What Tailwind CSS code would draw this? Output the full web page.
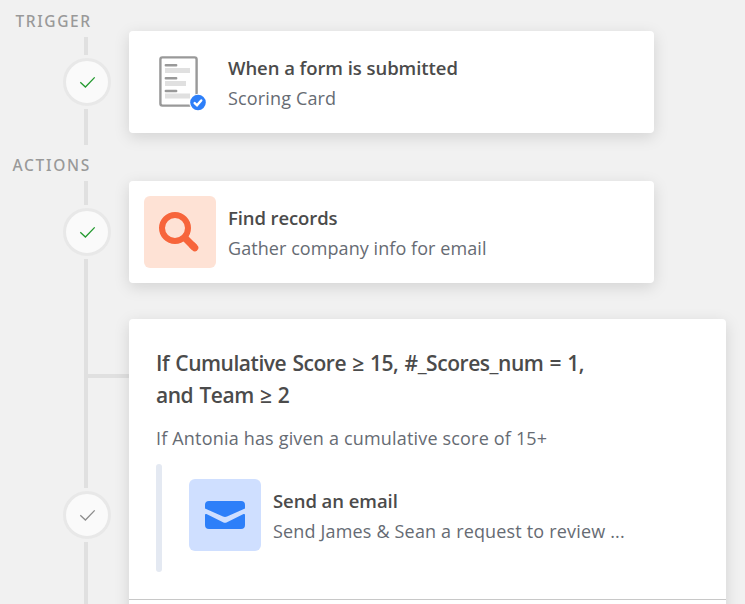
<!DOCTYPE html>
<html lang="en">
<head>
<meta charset="utf-8">
<title>Automation</title>
<script src="https://cdn.jsdelivr.net/npm/@tailwindcss/browser@4"></script>
</head>
<body class="bg-[#f1f1f1] font-['Open_Sans','Noto_Sans',sans-serif] text-[#4b4b4b]">
<div class="flex h-[604px] w-[745px] overflow-hidden">
  <aside class="flex w-[129px] shrink-0 flex-col">
    <h2 class="mt-[9px] h-6 pl-[15.5px] font-['Noto_Sans','Open_Sans',sans-serif] text-[15.5px] leading-6 font-medium tracking-[1.6px] whitespace-nowrap text-[#999]">TRIGGER</h2>
    <div class="mt-1 ml-[84px] h-[18px] w-1 bg-[#e0e0e0]"></div>
    <div class="my-[3px] ml-[63px] flex size-12 items-center justify-center rounded-full border-[3px] border-[#e8e8e8] bg-[#fafafa]">
      <svg class="size-6" viewBox="0 0 24 24" fill="none" stroke="#22992e" stroke-width="1.3"><path d="M5.3 12.3 10.4 17 19.7 7.4"/></svg>
    </div>
    <div class="ml-[84px] h-9 w-1 bg-[#e0e0e0]"></div>
    <h2 class="mt-2 h-6 pl-[12.5px] font-['Noto_Sans','Open_Sans',sans-serif] text-[15.5px] leading-6 font-medium tracking-[1.7px] whitespace-nowrap text-[#999]">ACTIONS</h2>
    <div class="mt-1 ml-[84px] h-6 w-1 bg-[#e0e0e0]"></div>
    <div class="my-[3px] ml-[63px] flex size-12 items-center justify-center rounded-full border-[3px] border-[#e8e8e8] bg-[#fafafa]">
      <svg class="size-6" viewBox="0 0 24 24" fill="none" stroke="#22992e" stroke-width="1.3"><path d="M5.3 12.3 10.4 17 19.7 7.4"/></svg>
    </div>
    <div class="ml-[84px] flex h-[229px]">
      <div class="w-1 bg-[#e0e0e0]"></div>
      <div class="mt-[115px] h-1 flex-1 bg-[#e0e0e0]"></div>
    </div>
    <div class="my-[3px] ml-[63px] flex size-12 items-center justify-center rounded-full border-[3px] border-[#e8e8e8] bg-[#fafafa]">
      <svg class="size-6" viewBox="0 0 24 24" fill="none" stroke="#8c8c8c" stroke-width="1.3"><path d="M5.3 12.3 10.4 17 19.7 7.4"/></svg>
    </div>
    <div class="ml-[84px] w-1 flex-1 bg-[#e0e0e0]"></div>
  </aside>

  <main class="flex flex-col pt-[31px]">
    <section class="flex h-[102px] w-[525px] shrink-0 items-center rounded bg-white pl-[15px] shadow-[0_4px_16px_rgba(0,0,0,0.13)]">
      <svg class="size-[72px]" viewBox="0 0 72 72" fill="none">
        <rect x="16.4" y="11.4" width="36.2" height="48.2" rx="2" stroke="#999" stroke-width="2.4"/>
        <path d="M21.800 19.300H32.200M21.800 32.200H32.200M21.800 45H32.200" stroke="#999" stroke-width="2.4" stroke-linecap="round"/>
        <path d="M21 22h25v5H21zM21 35h21v5H21zM21 47.500h25v5H21z" fill="#e0e0e0"/>
        <circle cx="54" cy="56.500" r="8.800" fill="#fff"/>
        <circle cx="54" cy="56.500" r="7.800" fill="#2d7ff9"/>
        <path d="M50.700 57.200 53 59.300 57.200 54.500" stroke="#fff" stroke-width="2.500" stroke-linecap="round"/>
      </svg>
      <div class="ml-3 pt-0.5 whitespace-nowrap">
        <h3 class="text-[18.5px] leading-[30px] font-semibold tracking-[-0.06px]">When a form is submitted</h3>
        <p class="text-[18px] leading-[30px] tracking-[0.15px] text-[#666b73]">Scoring Card</p>
      </div>
    </section>

    <section class="mt-12 flex h-[102px] w-[525px] shrink-0 items-center rounded bg-white pl-[15px] shadow-[0_4px_16px_rgba(0,0,0,0.13)]">
      <svg class="size-[72px] rounded-md bg-[#fee2d5]" viewBox="0 0 72 72" fill="none" stroke="#f7653b">
        <circle cx="31" cy="32" r="13" stroke-width="6"/>
        <path d="M40 41 50.500 51.500" stroke-width="7"/>
        <path d="M48.500 49.500 50.800 51.800" stroke-width="7" stroke-linecap="round"/>
      </svg>
      <div class="ml-3 pt-0.5 whitespace-nowrap">
        <h3 class="text-[18.5px] leading-[30px] font-semibold tracking-[-0.1px]">Find records</h3>
        <p class="text-[18px] leading-[30px] tracking-[0.07px] text-[#666b73]">Gather company info for email</p>
      </div>
    </section>

    <section class="mt-9 h-[320px] w-[597px] shrink-0 rounded-t bg-white shadow-[0_4px_16px_rgba(0,0,0,0.13)]">
      <div class="h-[281px] border-b border-[#c8c8c8] px-[27px] pt-7">
        <h2 class="text-[21px] leading-8 font-semibold tracking-[-0.46px] [word-spacing:1.2px] whitespace-nowrap">If Cumulative Score ≥ 15, #_Scores_num = 1,<br>and Team ≥ 2</h2>
        <p class="mt-3 text-[18px] leading-[30px] tracking-[0.18px] whitespace-nowrap text-[#666b73]">If Antonia has given a cumulative score of 15+</p>
        <div class="mt-[11px] flex h-[108px] items-center">
          <div class="h-full w-1.5 rounded-full bg-[#e4e9f2]"></div>
          <svg class="-mt-[6px] ml-[27px] size-[72px] rounded-md bg-[#cfdfff]" viewBox="0 0 72 72" fill="#2d7ff9">
            <path d="M20 22H52Q56 22 56 26V29.500L38 37.500Q36 38.400 34 37.500L16 29.500V26Q16 22 20 22Z"/>
            <path d="M16 36Q16 34.500 17.500 35.100L34 43.200Q36 44.400 38 43.200L54.500 35.100Q56 34.500 56 36V46Q56 50 52 50H20Q16 50 16 46Z"/>
          </svg>
          <div class="-mt-1 ml-3 whitespace-nowrap">
            <h3 class="text-[18.5px] leading-[30px] font-semibold tracking-[-0.06px]">Send an email</h3>
            <p class="text-[18px] leading-[30px] tracking-[0.17px] text-[#666b73]">Send James &amp; Sean a request to review ...</p>
          </div>
        </div>
      </div>
    </section>
  </main>
</div>
</body>
</html>
